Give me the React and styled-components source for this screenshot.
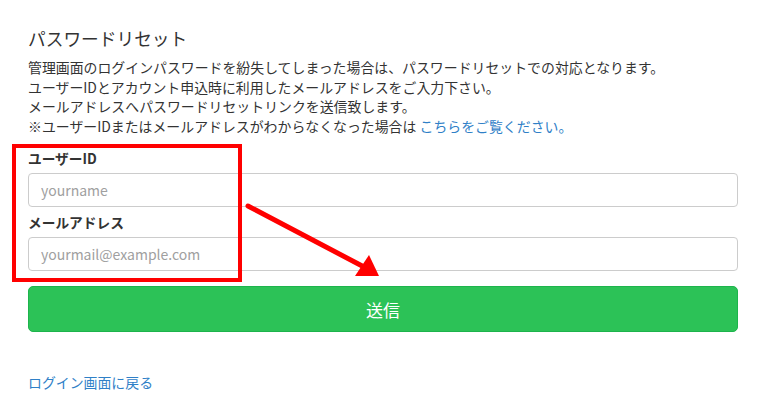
import React from 'react';
import styled, { createGlobalStyle } from 'styled-components';

const GlobalStyle = createGlobalStyle`
  html, body {
    margin: 0;
    padding: 0;
    background: #ffffff;
  }
  body {
    font-family: "Noto Sans CJK JP", "Noto Sans", sans-serif;
    color: #333333;
  }
`;

const App = () => {
  return (
    <>
      <GlobalStyle />
      <Page>
        <Title>パスワードリセット</Title>
        <Intro>
          管理画面のログインパスワードを紛失してしまった場合は、パスワードリセットでの対応となります。
          <br />
          ユーザーIDとアカウント申込時に利用したメールアドレスをご入力下さい。
          <br />
          メールアドレスへパスワードリセットリンクを送信致します。
          <br />
          ※ユーザーIDまたはメールアドレスがわからなくなった場合は <Link href="#">こちらをご覧ください。</Link>
        </Intro>

        <Form onSubmit={(e) => e.preventDefault()}>
          <Field>
            <Label htmlFor="user-id">ユーザーID</Label>
            <Input id="user-id" type="text" placeholder="yourname" />
          </Field>
          <Field>
            <Label htmlFor="mail">メールアドレス</Label>
            <Input id="mail" type="email" placeholder="yourmail@example.com" />
          </Field>
          <SubmitButton type="submit">送信</SubmitButton>
        </Form>

        <BackLink href="#">ログイン画面に戻る</BackLink>

        {/* annotation drawn over the form */}
        <Highlight />
        <Arrow width="760" height="414" viewBox="0 0 760 414">
          <line x1="248" y1="206" x2="366" y2="268" stroke="#ff0000" strokeWidth="5" strokeLinecap="round" />
          <polygon points="379,276 355,276 369,255" fill="#ff0000" />
        </Arrow>
      </Page>
    </>
  );
};

// --- Styled Components ---

const Page = styled.div`
  position: relative;
  width: 760px;
  height: 414px;
  box-sizing: border-box;
  padding: 26px 22px 0 28px;
  overflow: hidden;
`;

const Title = styled.h2`
  margin: 0;
  font-size: 17.7px;
  line-height: 24px;
  font-weight: 400;
  color: #333333;
`;

const Intro = styled.p`
  margin: 8px 0 0;
  font-size: 13.9px;
  line-height: 19.5px;
  color: #333333;
`;

const Link = styled.a`
  color: #2f80c7;
  text-decoration: none;
`;

const Form = styled.form`
  display: flex;
  flex-direction: column;
  margin-top: 12px;
`;

const Field = styled.div`
  display: flex;
  flex-direction: column;
  gap: 5px;
  margin-bottom: 5px;
`;

const Label = styled.label`
  font-size: 13.7px;
  line-height: 20px;
  font-weight: 700;
  color: #333333;
`;

const Input = styled.input`
  box-sizing: border-box;
  height: 34px;
  width: 100%;
  padding: 0 12px;
  border: 1px solid #cccccc;
  border-radius: 4px;
  font-family: "Noto Sans CJK JP", "Noto Sans", sans-serif;
  font-size: 14px;
  color: #333333;
  outline: none;

  &::placeholder {
    color: #a0a0a0;
  }
`;

const SubmitButton = styled.button`
  box-sizing: border-box;
  margin-top: 10px;
  height: 46px;
  width: 100%;
  border: 1px solid #1db44c;
  border-radius: 5px;
  background: #2cc257;
  color: #ffffff;
  font-family: "Noto Sans CJK JP", "Noto Sans", sans-serif;
  font-size: 17px;
  cursor: pointer;
`;

const BackLink = styled.a`
  display: inline-block;
  margin-top: 40px;
  font-size: 13.9px;
  line-height: 20px;
  color: #2f80c7;
  text-decoration: none;
`;

const Highlight = styled.div`
  position: absolute;
  left: 12px;
  top: 144px;
  width: 230px;
  height: 138px;
  box-sizing: border-box;
  border: 4px solid #ff0000;
  pointer-events: none;
`;

const Arrow = styled.svg`
  position: absolute;
  left: 0;
  top: 0;
  pointer-events: none;
`;

export default App;
